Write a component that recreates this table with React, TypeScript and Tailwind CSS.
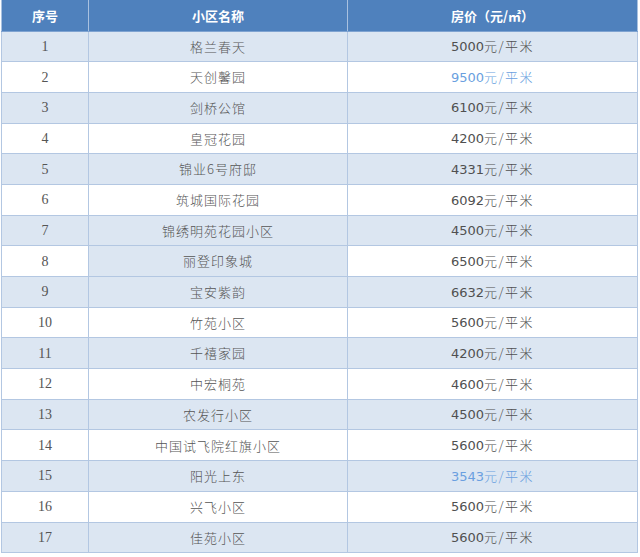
import React from 'react';

// ─── Data ────────────────────────────────────────────────────────────────────

interface Row {
    no: number;
    name: string;
    price: string;
    highlight?: boolean;
}

const rows: Row[] = [
    { no: 1, name: '格兰春天', price: '5000' },
    { no: 2, name: '天创馨园', price: '9500', highlight: true },
    { no: 3, name: '剑桥公馆', price: '6100' },
    { no: 4, name: '皇冠花园', price: '4200' },
    { no: 5, name: '锦业6号府邸', price: '4331' },
    { no: 6, name: '筑城国际花园', price: '6092' },
    { no: 7, name: '锦绣明苑花园小区', price: '4500' },
    { no: 8, name: '丽登印象城', price: '6500' },
    { no: 9, name: '宝安紫韵', price: '6632' },
    { no: 10, name: '竹苑小区', price: '5600' },
    { no: 11, name: '千禧家园', price: '4200' },
    { no: 12, name: '中宏桐苑', price: '4600' },
    { no: 13, name: '农发行小区', price: '4500' },
    { no: 14, name: '中国试飞院红旗小区', price: '5600' },
    { no: 15, name: '阳光上东', price: '3543', highlight: true },
    { no: 16, name: '兴飞小区', price: '5600' },
    { no: 17, name: '佳苑小区', price: '5600' },
];

const cjk = "font-['Liberation_Serif','Noto_Sans_CJK_SC',serif]";

export default function App() {
    return (
        <div className="w-[640px] h-[557px] bg-white pl-[1px]">
            <table className="w-[636px] border-collapse table-fixed text-[13px] text-[#4a4a4a]">
                <colgroup>
                    <col className="w-[87px]" />
                    <col className="w-[259px]" />
                    <col className="w-[290px]" />
                </colgroup>
                <thead>
                    <tr className="h-[31px] bg-[#4f81bd] text-white font-bold font-['Noto_Sans_CJK_SC',sans-serif] text-[13px]">
                        <th className="border-x border-[#a9c1e0] border-b border-b-[#7fa3d1]">序号</th>
                        <th className="border-x border-[#a9c1e0] border-b border-b-[#7fa3d1]">小区名称</th>
                        <th className="border-x border-[#a9c1e0] border-b border-b-[#7fa3d1]">房价（元/㎡）</th>
                    </tr>
                </thead>
                <tbody>
                    {rows.map((r) => {
                        const light = r.no % 2 === 1;
                        const bg = light ? 'bg-[#dce6f2]' : 'bg-white';
                        const midBg = r.no === 8 ? 'bg-[#dce6f2]' : bg;
                        return (
                            <tr key={r.no} className="h-[30.7px]">
                                <td className={`${bg} ${cjk} text-[14px] text-[#555] border border-[#b3c7e2] text-center`}>
                                    {r.no}
                                </td>
                                <td className={`${midBg} font-['Noto_Sans_CJK_SC',sans-serif] font-light tracking-[1px] text-[#555] border border-[#b3c7e2] text-center`}>
                                    {r.name}
                                </td>
                                <td
                                    className={`${bg} font-['DejaVu_Sans','Noto_Sans_CJK_SC',sans-serif] text-[13px] border border-[#b3c7e2] text-center ${
                                        r.highlight ? 'text-[#6a9fe0]' : 'text-[#505050]'
                                    }`}
                                >
                                    <span>{r.price}</span>
                                    <span className="font-['Noto_Sans_CJK_SC',sans-serif] font-light text-[13px] tracking-[1.5px]">元/平米</span>
                                </td>
                            </tr>
                        );
                    })}
                </tbody>
            </table>
        </div>
    );
}
